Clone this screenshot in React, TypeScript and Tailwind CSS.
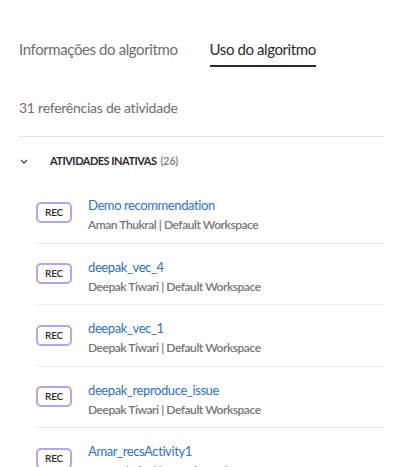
import React from "react";

const rows = [
  { title: "Demo recommendation", sub: "Aman Thukral | Default Workspace" },
  { title: "deepak_vec_4", sub: "Deepak Tiwari | Default Workspace" },
  { title: "deepak_vec_1", sub: "Deepak Tiwari | Default Workspace" },
  { title: "deepak_reproduce_issue", sub: "Deepak Tiwari | Default Workspace" },
  { title: "Amar_recsActivity1", sub: "Aman Thukral | Default Workspace" },
];

export default function App() {
  return (
    <div
      className="w-[403px] h-[467px] overflow-hidden bg-white"
      style={{ fontFamily: "Lato, 'Open Sans', sans-serif" }}
    >
      <div className="pl-[19px] pr-[19px]">
        <div className="flex gap-[32px] pt-[37px]">
          <div className="h-[30px] text-[15px] leading-[24px] text-[#6e6e6e] tracking-[-0.4px]">
            Informações do algoritmo
          </div>
          <div className="h-[30px] text-[15px] leading-[24px] text-[#2c2c2c] border-b-2 border-[#2c2c2c] tracking-[-0.4px]">
            Uso do algoritmo
          </div>
        </div>
        <div className="pt-[29px] text-[14px] leading-[24px] text-[#6e6e6e] tracking-[-0.25px]">
          31 referências de atividade
        </div>
        <div className="mt-[16px] border-t border-[#e1e1e1]" />
        <div className="flex items-center h-[45px] pt-[3px]">
          <svg width="10" height="10" viewBox="0 0 10 10">
            <path d="M2 4 L5 7 L8 4" fill="none" stroke="#4b4b4b" strokeWidth="1.3" />
          </svg>
          <span className="ml-[21px] text-[11px] font-bold text-[#2c2c2c] tracking-[-0.5px]">
            ATIVIDADES INATIVAS
          </span>
          <span className="ml-[4px] text-[11px] text-[#7a7a7a] font-semibold tracking-[-0.3px]">(26)</span>
        </div>
        <div className="pl-[17px]">
          {rows.map((r, i) => (
            <div key={i} className="flex items-center h-[61.5px] border-b border-[#ececec]">
              <div className="w-[36px] h-[21px] rounded-[5px] border-2 border-[#b1a6f0] flex items-center justify-center text-[10px] font-semibold text-[#2c2c2c] tracking-[-0.2px]">
                REC
              </div>
              <div className="ml-[16px] pt-[6px] flex flex-col">
                <div className="text-[13px] leading-[20px] text-[#2d6fd9] tracking-[-0.4px]">{r.title}</div>
                <div className="text-[12px] leading-[20px] text-[#767676] font-semibold tracking-[-0.45px]">{r.sub}</div>
              </div>
            </div>
          ))}
        </div>
      </div>
    </div>
  );
}
